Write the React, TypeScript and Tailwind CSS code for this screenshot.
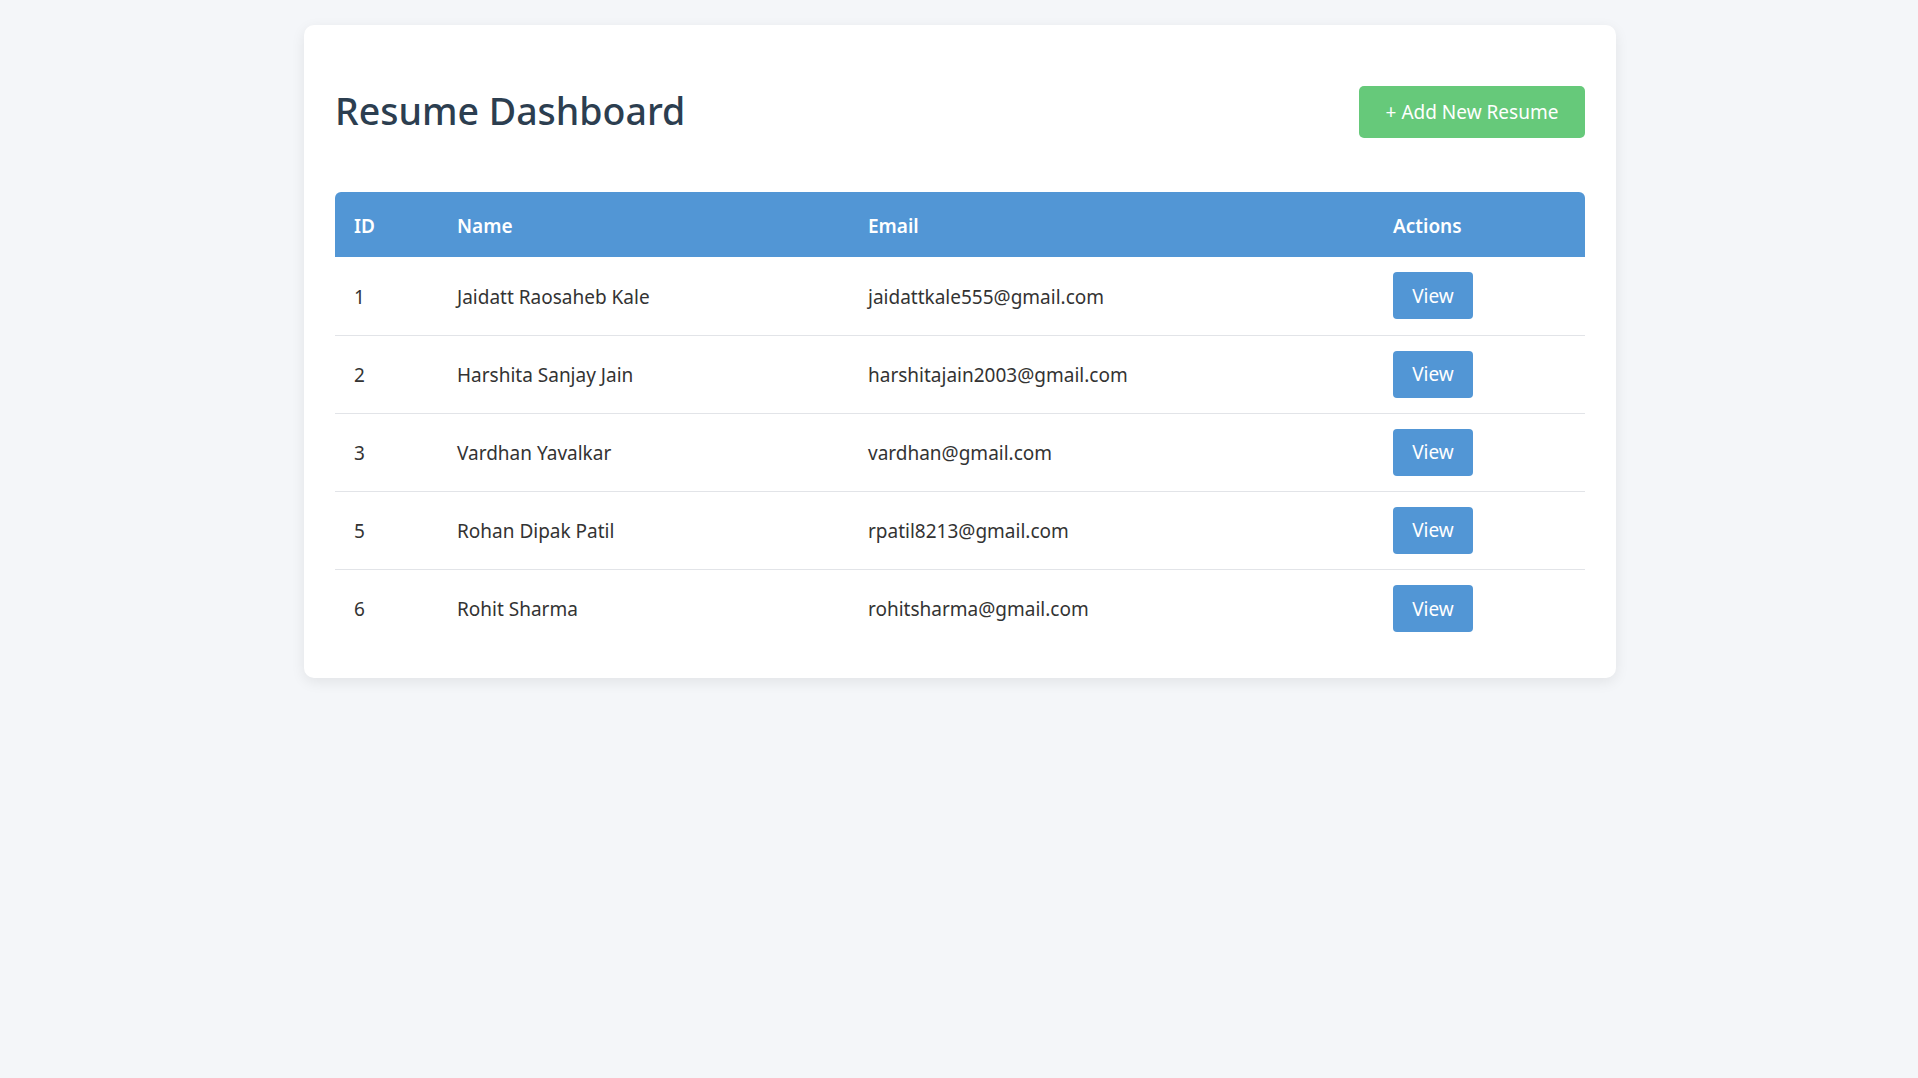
import React from 'react';

type Resume = { id: number; name: string; email: string };

const resumes: Resume[] = [
  { id: 1, name: 'Jaidatt Raosaheb Kale', email: 'jaidattkale555@gmail.com' },
  { id: 2, name: 'Harshita Sanjay Jain', email: 'harshitajain2003@gmail.com' },
  { id: 3, name: 'Vardhan Yavalkar', email: 'vardhan@gmail.com' },
  { id: 5, name: 'Rohan Dipak Patil', email: 'rpatil8213@gmail.com' },
  { id: 6, name: 'Rohit Sharma', email: 'rohitsharma@gmail.com' },
];

export default function App() {
  return (
    <div className="min-h-screen bg-[#f4f6f9] pt-[25px] font-['Noto_Sans','Open_Sans',sans-serif]">
      <div className="mx-auto w-[1312px] translate-x-[1px] rounded-[10px] bg-white p-[31px] shadow-[0_4px_14px_rgba(0,0,0,0.08)]">
        <div className="mb-[24px] flex h-[112px] items-center justify-between">
          <h1 className="pb-[2px] text-[37.5px] font-medium text-[#2c3e50]">Resume Dashboard</h1>
          <button className="h-[52px] w-[226px] rounded-[5px] bg-[#66c97a] pt-[1px] text-[19px] text-white">
            + Add New Resume
          </button>
        </div>

        <table className="w-full border-collapse text-left text-[19px]">
          <colgroup>
            <col className="w-[103px]" />
            <col className="w-[411px]" />
            <col className="w-[525px]" />
            <col className="w-[211px]" />
          </colgroup>
          <thead>
            <tr className="h-[65px] bg-[#5296d5] text-white">
              <th className="rounded-tl-[6px] pl-[19px] pt-[3px] font-semibold">ID</th>
              <th className="pl-[19px] pt-[3px] font-semibold">Name</th>
              <th className="pl-[19px] pt-[3px] font-semibold">Email</th>
              <th className="rounded-tr-[6px] pl-[19px] pt-[3px] font-semibold">Actions</th>
            </tr>
          </thead>
          <tbody className="text-[#333]">
            {resumes.map((r, i) => (
              <tr key={r.id} className={i < resumes.length - 1 ? 'h-[78px] border-b border-[#e2e4e8]' : 'h-[78px]'}>
                <td className="pl-[19px] pt-[2px]">{r.id}</td>
                <td className="pl-[19px] pt-[2px]">{r.name}</td>
                <td className="pl-[19px] pt-[2px]">{r.email}</td>
                <td className="pl-[19px]">
                  <button className="h-[47px] w-[80px] rounded-[4px] bg-[#5296d5] pt-[1px] text-[19px] text-white">View</button>
                </td>
              </tr>
            ))}
          </tbody>
        </table>
      </div>
    </div>
  );
}
